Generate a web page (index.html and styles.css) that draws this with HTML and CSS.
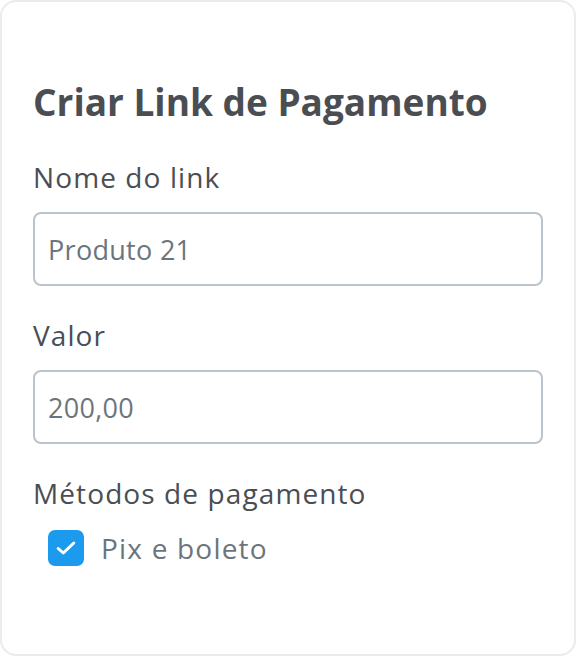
FILE: index.html
```html
<!DOCTYPE html>
<html lang="pt-BR">
<head>
<meta charset="utf-8">
<title>Criar Link de Pagamento</title>
<link rel="stylesheet" href="styles.css">
</head>
<body>
<div class="card">
  <h1 class="title">Criar Link de Pagamento</h1>
  <div class="field">
    <label class="label" for="nome">Nome do link</label>
    <input class="input" id="nome" type="text" value="Produto 21">
  </div>
  <div class="field">
    <label class="label" for="valor">Valor</label>
    <input class="input" id="valor" type="text" value="200,00">
  </div>
  <div class="field">
    <span class="label">Métodos de pagamento</span>
    <label class="check-row">
      <span class="checkbox">
        <svg width="22" height="22" viewBox="0 0 22 22" aria-hidden="true"><path d="M3.2 11.5 L8.3 16 L18.8 6" fill="none" stroke="#fff" stroke-width="3" stroke-linecap="round" stroke-linejoin="round"/></svg>
      </span>
      <span class="check-text">Pix e boleto</span>
    </label>
  </div>
</div>
</body>
</html>
```
FILE: styles.css
```css
html, body {
  margin: 0;
  padding: 0;
  background: #ffffff;
}
body {
  font-family: "Open Sans", "Noto Sans", sans-serif;
  color: #4a4e53;
}
.card {
  box-sizing: border-box;
  width: 576px;
  height: 656px;
  border: 2px solid #ebebeb;
  border-radius: 16px;
  background: #fff;
  padding: 78px 31px 0 31px;
  display: flex;
  flex-direction: column;
}
.title {
  margin: 0;
  font-size: 37px;
  line-height: 44px;
  font-weight: 700;
  color: #4a4e53;
}
.field {
  display: flex;
  flex-direction: column;
  margin-top: 31px;
}
.field:first-of-type {
  margin-top: 35px;
}
.label {
  font-size: 28px;
  line-height: 36px;
  letter-spacing: 1.1px;
  color: #4a4e53;
  margin-bottom: 17px;
}
.input {
  box-sizing: border-box;
  width: 510px;
  height: 74px;
  border: 2px solid #b9c4ce;
  border-radius: 8px;
  padding: 0 13px;
  font-family: "Open Sans", "Noto Sans", sans-serif;
  font-size: 27px;
  letter-spacing: 0.3px;
  color: #6c757d;
  background: #fff;
  outline: none;
}
.check-row {
  display: flex;
  align-items: center;
  gap: 17px;
  margin-left: 15px;
  margin-top: 2px;
}
.checkbox {
  width: 36px;
  height: 36px;
  border-radius: 7px;
  background: #1b9aee;
  display: flex;
  align-items: center;
  justify-content: center;
}
.check-text {
  font-size: 28px;
  line-height: 36px;
  letter-spacing: 1.2px;
  color: #6c757d;
}
```
